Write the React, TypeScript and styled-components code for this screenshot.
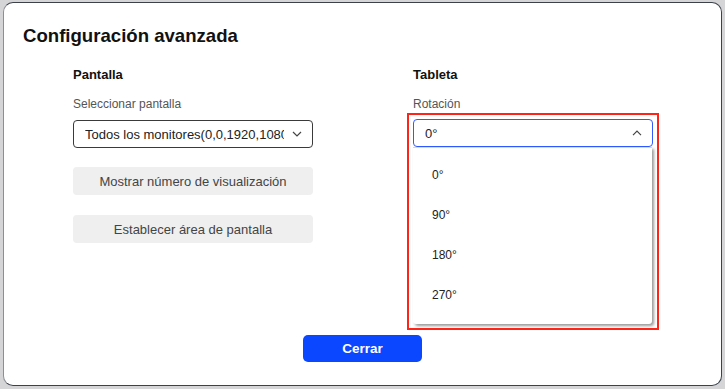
import React from 'react'
import styled, {createGlobalStyle} from 'styled-components'

const GlobalStyle = createGlobalStyle`
    html, body {
        margin: 0;
        padding: 0;
        background: #d5d5d7;
        font-family: "Liberation Sans", Arial, sans-serif;
    }
`

const Page = styled.div`
    width: 725px;
    height: 389px;
    box-sizing: border-box;
    padding: 2px 3px 3px 3px;
`

const Dialog = styled.div`
    box-sizing: border-box;
    width: 719px;
    height: 384px;
    background: #ffffff;
    border: 1px solid #3c414a;
    border-left-color: #8b8e94;
    border-radius: 10px;
    display: flex;
    flex-direction: column;
    padding: 22px 0 23px 19px;
`

const Title = styled.h1`
    margin: 0;
    font-size: 18.6px;
    line-height: 22px;
    font-weight: 700;
    color: #111111;
`

const Columns = styled.div`
    display: flex;
    gap: 100px;
    padding-left: 50px;
    margin-top: 20px;
`

const Column = styled.div`
    width: 240px;
    display: flex;
    flex-direction: column;
`

const Heading = styled.h2`
    margin: 0;
    font-size: 13px;
    line-height: 16px;
    font-weight: 700;
    color: #111111;
`

const Label = styled.div`
    margin-top: 13px;
    font-size: 12px;
    line-height: 16px;
    color: #555555;
`

const Select = styled.div<{$open?: boolean}>`
    box-sizing: border-box;
    height: 28px;
    display: flex;
    align-items: center;
    padding: 0 10px 0 11px;
    border: 1px solid ${p => (p.$open ? '#2f5bff' : '#3a3a3a')};
    border-radius: 4px;
    font-size: 13px;
    color: #222222;
    svg {
        flex-shrink: 0;
        margin-left: 8px;
    }
`

const SelectValue = styled.span`
    flex: 1;
    overflow: hidden;
    white-space: nowrap;
`

const Highlight = styled.div`
    margin-top: 7px;
    outline: 2px solid #ff2417;
    outline-offset: 4px;
`

const Menu = styled.div`
    background: #ffffff;
    border-top: 1px solid #d8d8d8;
    border-radius: 0 0 3px 3px;
    box-shadow: 2px 2px 3px rgba(0, 0, 0, 0.4);
    padding: 7px 0 9px 0;
    margin-right: 1px;
`

const MenuItem = styled.div`
    height: 40px;
    display: flex;
    align-items: center;
    padding-left: 19px;
    font-size: 12px;
    color: #222222;
`

const GrayButton = styled.button<{$gap: number}>`
    box-sizing: border-box;
    width: 240px;
    height: 28px;
    margin-top: ${p => p.$gap}px;
    border: none;
    border-radius: 4px;
    background: #efefef;
    font-family: "Liberation Sans", Arial, sans-serif;
    font-size: 13px;
    color: #444444;
`

const Footer = styled.div`
    margin-top: auto;
    display: flex;
    justify-content: center;
    padding-right: 19px;
`

const PrimaryButton = styled.button`
    width: 119px;
    height: 27px;
    border: none;
    border-radius: 5px;
    background: #0a47ff;
    color: #ffffff;
    font-family: "Liberation Sans", Arial, sans-serif;
    font-size: 13.5px;
    font-weight: 700;
`

const Chevron: React.FC<{up?: boolean}> = ({up}) => (
    <svg width="10" height="6" viewBox="0 0 10 6">
        <path
            d={up ? 'M1 5.2 L5 1.2 L9 5.2' : 'M1 1 L5 5 L9 1'}
            fill="none"
            stroke="#444"
            strokeWidth="1.2"
        />
    </svg>
)

const rotations = ['0°', '90°', '180°', '270°']

const App: React.FC = () => {
    return (
        <Page>
            <GlobalStyle />
            <Dialog>
                <Title>Configuración avanzada</Title>
                <Columns>
                    <Column>
                        <Heading>Pantalla</Heading>
                        <Label>Seleccionar pantalla</Label>
                        <Select style={{marginTop: 8}}>
                            <SelectValue>Todos los monitores(0,0,1920,1080)</SelectValue>
                            <Chevron />
                        </Select>
                        <GrayButton $gap={19}>Mostrar número de visualización</GrayButton>
                        <GrayButton $gap={20}>Establecer área de pantalla</GrayButton>
                    </Column>
                    <Column>
                        <Heading>Tableta</Heading>
                        <Label>Rotación</Label>
                        <Highlight>
                            <Select $open>
                                <SelectValue>0°</SelectValue>
                                <Chevron up />
                            </Select>
                            <Menu>
                                {rotations.map(r => (
                                    <MenuItem key={r}>{r}</MenuItem>
                                ))}
                            </Menu>
                        </Highlight>
                    </Column>
                </Columns>
                <Footer>
                    <PrimaryButton>Cerrar</PrimaryButton>
                </Footer>
            </Dialog>
        </Page>
    )
}

export default App
